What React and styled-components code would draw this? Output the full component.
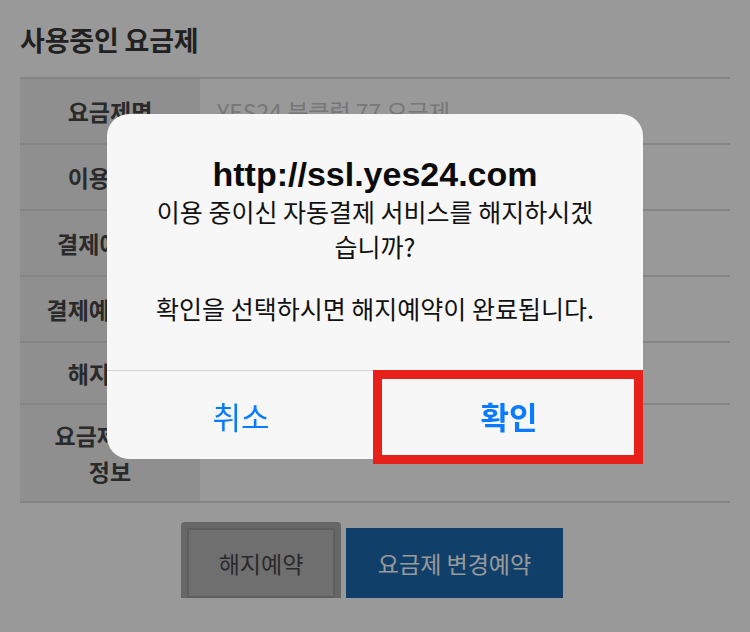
import React from "react";
import styled, { createGlobalStyle } from "styled-components";

// 요금제 정보 (표에 들어가는 내용)
const planRows = [
  { label: "요금제명", value: "YES24 북클럽 77 요금제" },
  { label: "이용기간", value: "2023.01.15 ~ 2023.02.14" },
  { label: "결제예정일", value: "2023.02.15" },
  { label: "결제예정금액", value: "7,700원" },
  { label: "해지예약", value: "" },
  { label: "요금제 변경 정보", value: "" },
];

function App() {
  return (
    <>
      <GlobalStyle />
      <Page>
        <PageTitle>사용중인 요금제</PageTitle>

        <PlanTable>
          {planRows.map((row) => (
            <PlanRow key={row.label}>
              <LabelCell>{row.label}</LabelCell>
              <ValueCell>{row.value}</ValueCell>
            </PlanRow>
          ))}
        </PlanTable>

        <ButtonBar>
          <CancelPlanButton>해지예약</CancelPlanButton>
          <ChangePlanButton>요금제 변경예약</ChangePlanButton>
        </ButtonBar>
      </Page>

      {/* 브라우저 확인창 */}
      <Backdrop>
        <Dialog>
          <DialogBody>
            <DialogTitle>http://ssl.yes24.com</DialogTitle>
            <DialogMessage>
              이용 중이신 자동결제 서비스를 해지하시겠
              <br />
              습니까?
            </DialogMessage>
            <DialogNote>확인을 선택하시면 해지예약이 완료됩니다.</DialogNote>
          </DialogBody>
          <DialogActions>
            <DialogButton>취소</DialogButton>
            <DialogButton $primary>
              확인
              <Highlight />
            </DialogButton>
          </DialogActions>
        </Dialog>
      </Backdrop>
    </>
  );
}

const GlobalStyle = createGlobalStyle`
  html, body {
    margin: 0;
    padding: 0;
    background: #ffffff;
  }
  body {
    font-family: "Noto Sans CJK KR", "Noto Sans", sans-serif;
  }
`;

const Page = styled.div`
  padding: 0 20px;
  display: flex;
  flex-direction: column;
`;

const PageTitle = styled.h2`
  margin: 22px 0 19px;
  font-size: 27px;
  font-weight: 700;
  line-height: 36px;
  color: #383838;
  letter-spacing: -0.2px;
`;

const PlanTable = styled.div`
  display: flex;
  flex-direction: column;
  border-top: 2px solid #dedede;
`;

const PlanRow = styled.div`
  display: grid;
  grid-template-columns: 180px 1fr;
  border-bottom: 2px solid #dedede;
`;

const LabelCell = styled.div`
  background: #eeeeee;
  padding: 12px 24px;
  display: flex;
  align-items: center;
  justify-content: center;
  text-align: center;
  font-size: 23px;
  font-weight: 700;
  line-height: 36px;
  color: #474747;
`;

const ValueCell = styled.div`
  padding: 14px 17px;
  display: flex;
  align-items: center;
  font-size: 23px;
  line-height: 36px;
  color: #c6c6c6;

  &:empty {
    padding: 0;
  }
`;

const ButtonBar = styled.div`
  display: flex;
  justify-content: center;
  gap: 11px;
  margin-top: 25px;
`;

const CancelPlanButton = styled.button`
  width: 148px;
  height: 70px;
  box-sizing: border-box;
  border: 2px solid #9d9d9d;
  border-radius: 1px;
  background: #b9b9b9;
  box-shadow: 0 0 0 6px #acacac;
  font-family: inherit;
  font-size: 23px;
  color: #474747;
`;

const ChangePlanButton = styled.button`
  width: 217px;
  height: 70px;
  border: none;
  background: #1b69af;
  font-family: inherit;
  font-size: 23px;
  color: #ffffff;
`;

const Backdrop = styled.div`
  position: fixed;
  inset: 0;
  background: rgba(0, 0, 0, 0.4);
  display: flex;
  justify-content: center;
  align-items: flex-start;
  padding-top: 114px;
`;

const Dialog = styled.div`
  position: relative;
  width: 536px;
  background: #f7f7f7;
  border-radius: 22px;
  display: flex;
  flex-direction: column;
`;

const DialogBody = styled.div`
  padding: 41px 12px 44px;
  display: flex;
  flex-direction: column;
  align-items: center;
  text-align: center;
  color: #111111;
`;

const DialogTitle = styled.div`
  font-family: "Liberation Sans", "Noto Sans CJK KR", sans-serif;
  font-size: 34px;
  font-weight: 700;
  line-height: 38px;
  color: #0b0b0b;
`;

const DialogMessage = styled.div`
  margin-top: 1px;
  font-size: 25px;
  line-height: 35px;
`;

const DialogNote = styled.div`
  margin-top: 27px;
  font-size: 25px;
  line-height: 35px;
`;

const DialogActions = styled.div`
  display: grid;
  grid-template-columns: 1fr 1fr;
  height: 88px;
  border-top: 1px solid #d4d4d4;
`;

const DialogButton = styled.div`
  position: relative;
  display: flex;
  align-items: center;
  justify-content: center;
  font-size: 31px;
  font-weight: ${(p) => (p.$primary ? 700 : 400)};
  color: #0a7aff;
`;

// 빨간 강조 표시 (스크린샷 위의 표시)
const Highlight = styled.span`
  position: absolute;
  top: -1px;
  left: -2px;
  right: 0;
  bottom: -5px;
  border: 9px solid #e8201a;
`;

export default App;
